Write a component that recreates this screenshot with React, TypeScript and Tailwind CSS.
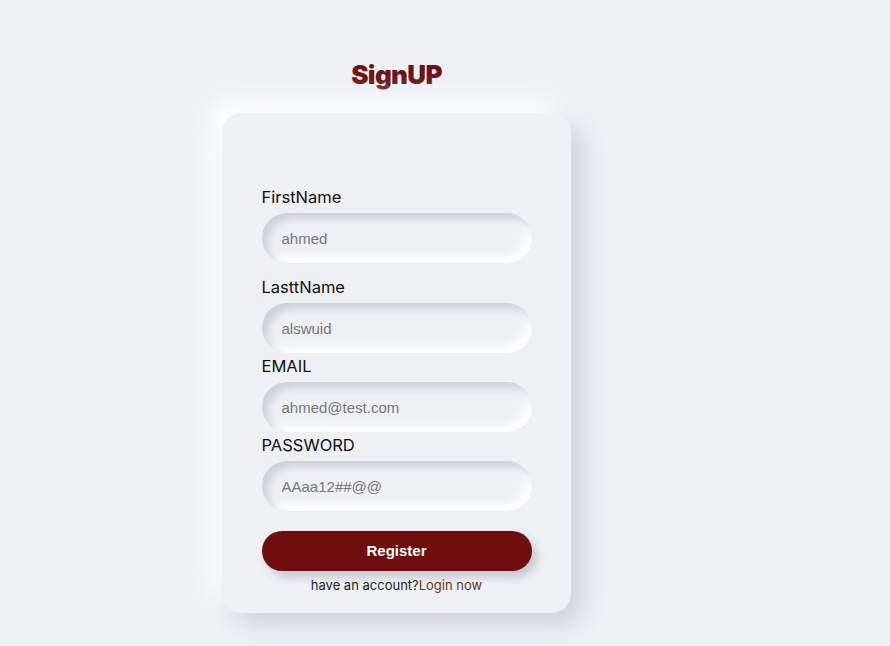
import React from "react";

const fields = [
  { label: "FirstName", value: "ahmed", gap: "mt-0" },
  { label: "LasttName", value: "alswuid", gap: "mt-3" },
  { label: "EMAIL", value: "ahmed@test.com", gap: "mt-px" },
  { label: "PASSWORD", value: "AAaa12##@@", gap: "mt-px" },
];

function Field({ label, value, gap }: { label: string; value: string; gap: string }) {
  return (
    <div className={`flex flex-col ${gap}`}>
      <label className="text-[16.5px] leading-6 text-[#111]">{label}</label>
      <input
        className="mt-1 h-[50px] w-[270px] rounded-full bg-[#eef0f4] px-5 text-[15px] text-gray-600 outline-none shadow-[inset_6px_6px_8px_#cdd0d6,inset_-6px_-6px_8px_#ffffff] placeholder:text-[#777]"
        style={{ fontFamily: "'Liberation Sans', Arial, sans-serif" }}
        placeholder={value}
      />
    </div>
  );
}

export default function App() {
  return (
    <div className="min-h-[646px] w-full bg-[#eef0f4] font-['Inter',sans-serif] pt-[60px] pl-[222px]">
      <div className="flex w-[349px] flex-col items-center">
        <h1 className="text-[26px] leading-[30px] font-black tracking-tight text-[#6b1414]">SignUP</h1>
        <div className="mt-[23px] flex w-[349px] flex-col items-center rounded-[20px] bg-[#eef0f4] pt-[72px] pb-[18px] shadow-[12px_12px_24px_#cfd2d8,-12px_-12px_24px_#ffffff]">
          {fields.map((f) => (
            <Field key={f.label} {...f} />
          ))}
          <button
            className="mt-5 h-10 w-[270px] rounded-full bg-[#6e0e0e] text-[15px] font-bold text-white shadow-[5px_6px_10px_#c4c7ce]"
            style={{ fontFamily: "'Liberation Sans', Arial, sans-serif" }}
          >
            Register
          </button>
          <p className="mt-1 text-[13px] leading-5 text-[#222]">
            have an account?<span className="text-[#6b3322]">Login now</span>
          </p>
        </div>
      </div>
    </div>
  );
}
